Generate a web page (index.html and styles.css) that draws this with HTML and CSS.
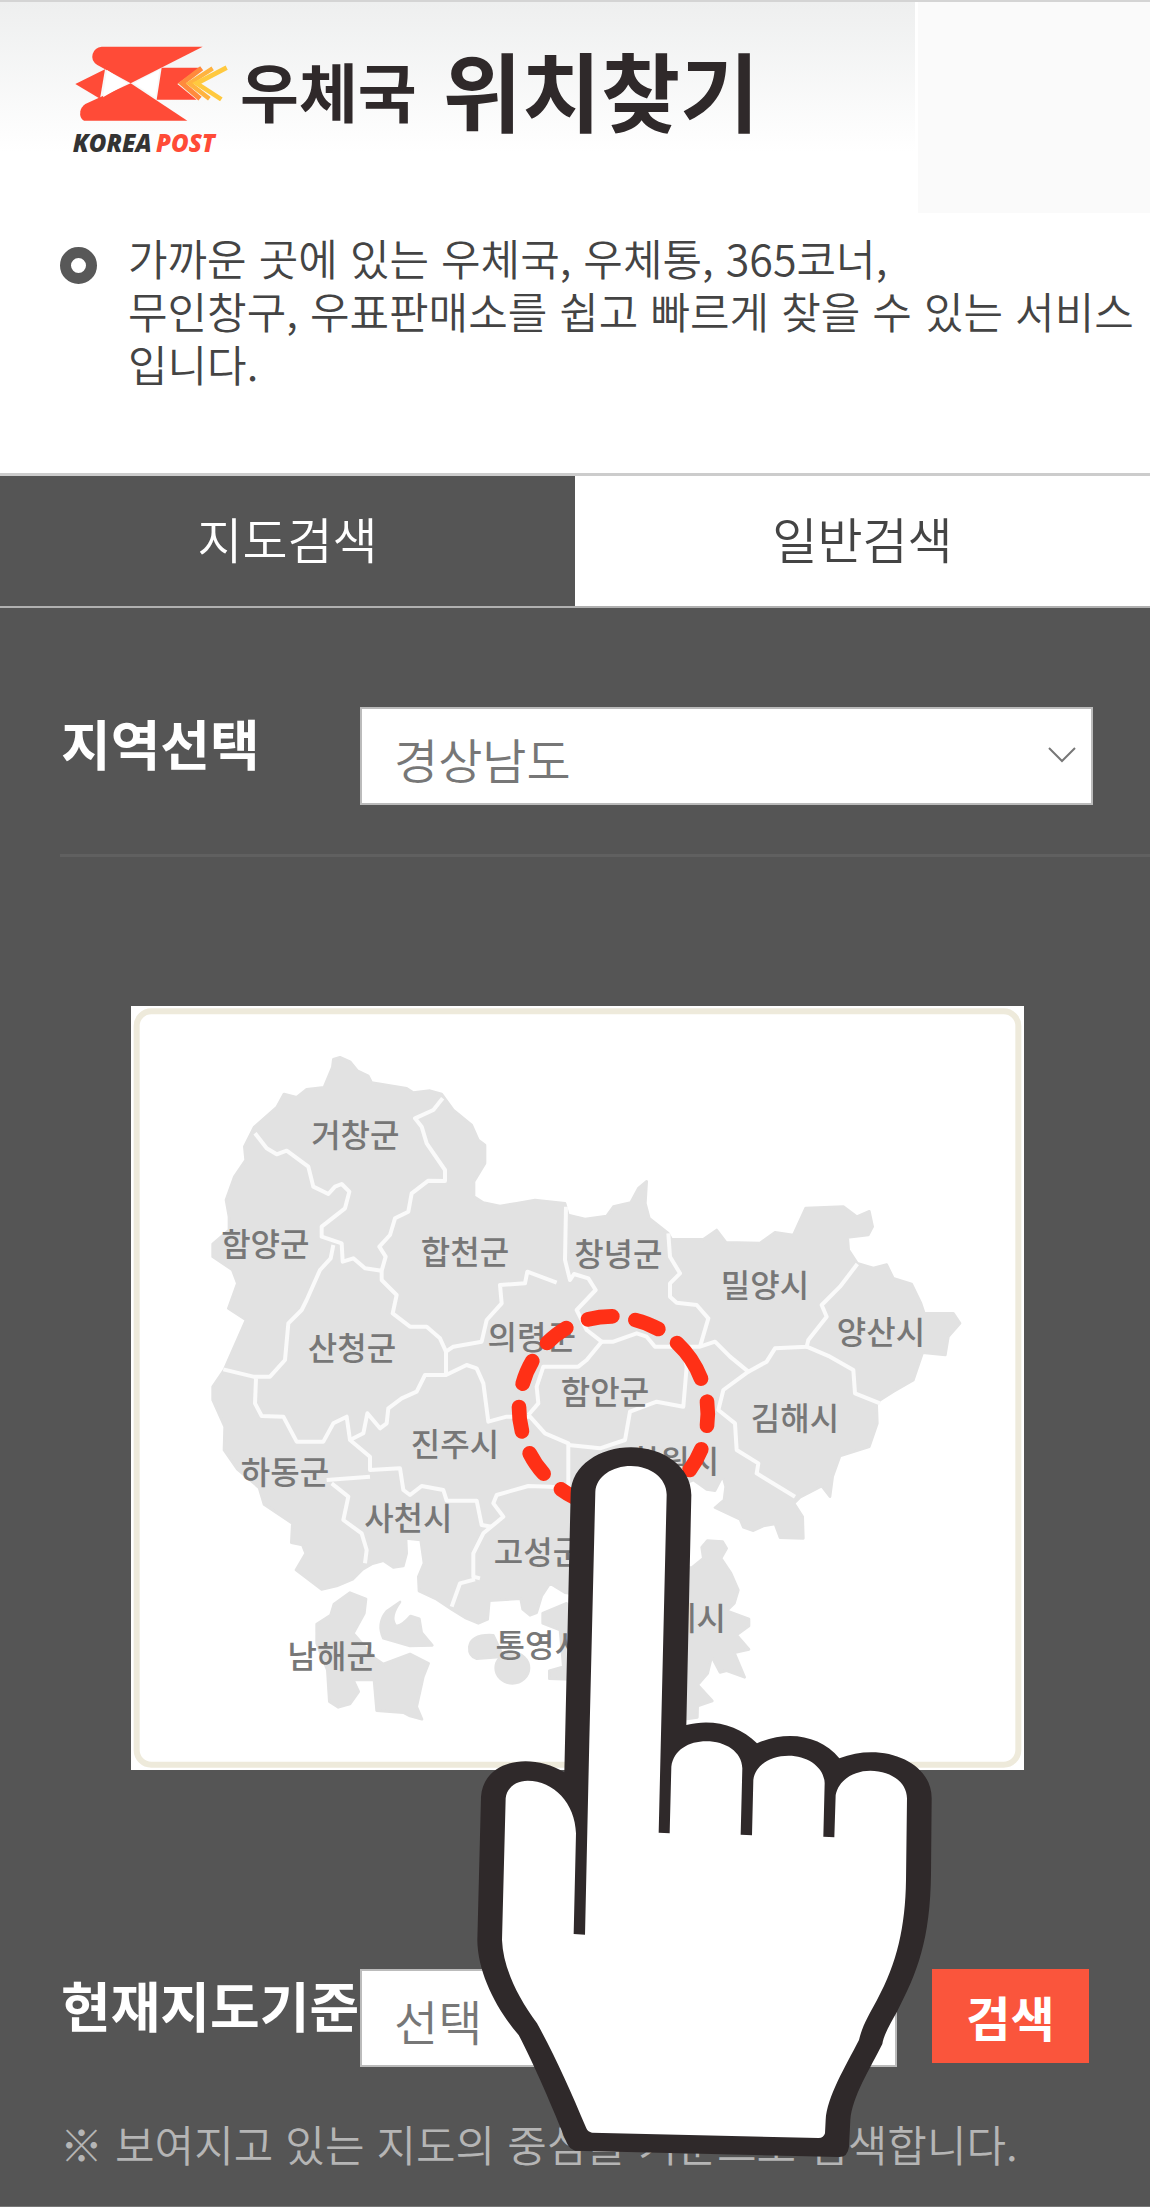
FILE: index.html
```
<!DOCTYPE html>
<html lang="ko">
<head>
  <meta charset="UTF-8">
  <meta name="viewport" content="width=device-width, initial-scale=1.0">
  <title>우체국 위치찾기</title>
  <link rel="stylesheet" href="styles.css">
</head>
<body>
  <!-- Header -->
  <header>
    <div class="brand">
      <svg class="logo" viewBox="0 0 540 390" role="img" aria-label="KOREA POST">
        <g fill="#ff4b37">
          <path d="M125 50 L428 50 L212 160 L112 105 Q92 92 98 72 Q104 52 125 50 Z"/>
          <path d="M212 160 L382 272 L72 272 Q58 266 61 244 Q64 230 76 222 Z"/>
          <path d="M135 118 L120 206 L46 162 Z"/>
          <path d="M305 113 L420 113 L352 162 L410 209 L290 209 Z"/>
        </g>
        <path d="M141 120 L202 160 L129 202 Z" fill="#fff"/>
        <path d="M298 120 L222 160 L286 202 Z" fill="#fff"/>
        <path d="M425 115 L366 160 L420 206" fill="none" stroke="#ff8a3c" stroke-width="15"/>
        <path d="M458 115 L388 160 L448 206" fill="none" stroke="#ffb33f" stroke-width="13"/>
        <path d="M500 113 L410 160 L484 208" fill="none" stroke="#ffc93f" stroke-width="14"/>
        <text class="logo-text" x="38" y="365" fill="#333">KOREA</text>
        <text class="logo-text" x="288" y="365" fill="#ff4b37">POST</text>
      </svg>
      <h1><span>우체국</span> 위치찾기</h1>
    </div>
    <div class="header-side"></div>
  </header>

  <!-- Description -->
  <p class="intro">가까운 곳에 있는 우체국, 우체통, 365코너,<br>무인창구, 우표판매소를 쉽고 빠르게 찾을 수 있는 서비스입니다.</p>

  <!-- Tabs -->
  <nav class="tabs">
    <a href="#" class="active">지도검색</a>
    <a href="#">일반검색</a>
  </nav>

  <!-- Map search -->
  <main>
    <div class="row region-row">
      <label for="region">지역선택</label>
      <div class="select-box">
        <select id="region">
          <option>경상남도</option>
        </select>
        <svg class="arrow" viewBox="0 0 28 16"><path d="M1 1 L14 14 L27 1"/></svg>
      </div>
    </div>

    <div class="map">
      <svg class="map-area" viewBox="33 48 2679 2292">
        <rect class="frame" x="50" y="64" width="2645" height="2260" rx="44"/>
        <!-- Land -->
        <g class="land">
          <path d="M660 202 L690 215 L712 242 L745 258 L755 278 L860 295 L880 308 L930 302 L965 312 L1000 360 L1055 405 L1075 450 L1095 465 L1095 520 L1062 575 L1062 620 L1090 638 L1140 648 L1190 640 L1245 630 L1335 640 L1345 675 L1395 687 L1460 678 L1480 650 L1532 638 L1555 595 L1580 574 L1576 640 L1588 685 L1645 730 L1655 748 L1750 748 L1790 720 L1818 757 L1920 759 L1965 727 L2020 735 L2057 654 L2170 650 L2210 680 L2248 664 L2258 710 L2245 735 L2183 742 L2186 780 L2212 820 L2260 834 L2300 824 L2320 865 L2375 882 L2403 940 L2413 970 L2500 970 L2520 1000 L2485 1040 L2476 1095 L2408 1088 L2380 1170 L2320 1205 L2280 1230 L2270 1245 L2272 1300 L2248 1370 L2160 1398 L2138 1460 L2130 1520 L2105 1488 L2040 1522 L2022 1540 L2048 1580 L2050 1645 L1980 1643 L1965 1602 L1930 1608 L1900 1622 L1870 1612 L1860 1588 L1785 1553 L1812 1530 L1817 1490 L1808 1458 L1785 1502 L1760 1498 L1720 1470 L1600 1520 L1420 1800 L1350 1810 L1335 1808 L1290 1780 L1265 1818 L1250 1868 L1230 1876 L1208 1858 L1202 1826 L1108 1832 L1103 1888 L1075 1900 L1035 1883 L995 1858 L950 1828 L897 1803 L895 1760 L912 1720 L902 1650 L858 1645 L860 1690 L850 1728 L820 1732 L790 1712 L755 1722 L728 1738 L698 1768 L650 1788 L605 1798 L528 1740 L557 1690 L547 1665 L514 1658 L517 1600 L432 1543 L417 1493 L352 1438 L312 1380 L314 1310 L278 1230 L278 1190 L312 1140 L378 990 L325 955 L352 880 L337 840 L278 800 L278 762 L327 720 L327 680 L318 630 L343 560 L377 510 L373 470 L402 412 L470 352 L492 312 L530 322 L560 298 L612 292 L637 232 L640 208 Z"/>
          <path d="M1745 1672 L1762 1652 L1808 1655 L1820 1675 L1803 1705 L1833 1750 L1855 1800 L1843 1840 L1820 1862 L1887 1887 L1887 1908 L1850 1935 L1887 1978 L1843 1988 L1874 2062 L1820 2042 L1800 2047 L1775 2000 L1763 2050 L1733 2085 L1777 2133 L1733 2148 L1732 2182 L1690 2188 L1640 2188 L1640 1733 L1715 1733 L1750 1705 Z"/>
          <path d="M690 1808 L738 1827 L733 1870 L700 1930 L765 2005 L790 2022 L870 1992 L926 2020 L910 2060 L890 2150 L906 2188 L870 2178 L850 2168 L770 2162 L762 2070 L700 2070 L716 2105 L690 2142 L655 2152 L628 2135 L622 2040 L590 1960 L590 1902 L632 1875 L642 1842 Z"/>
          <path d="M840 1836 Q808 1880 826 1906 Q840 1914 872 1878 L898 1886 L905 1928 L937 1966 L870 1968 L790 1945 Q770 1900 800 1864 Z"/>
          <path d="M1048 1970 Q1055 1932 1120 1936 L1150 2000 L1070 2006 Q1046 2000 1048 1970 Z"/>
          <ellipse cx="1177" cy="2034" rx="50" ry="46"/>
          <path d="M1268 1870 L1340 1840 L1400 1900 L1400 2070 L1288 2066 L1288 2042 L1330 2030 L1320 1920 L1268 1900 Z"/>
        </g>
        <!-- City and county borders -->
        <g class="border">
          <path d="M405 430 L440 475 L470 493 L500 482 L565 530 L580 590 L625 612 L645 590 L665 582 L688 605 L675 655 L605 710 L605 740 L665 760 L668 815 L700 805 L735 835 L785 842"/>
          <path d="M968 325 L940 360 L885 385 L905 410 L920 460 L975 540 L975 573 L925 572 L875 610 L865 665 L825 685 L810 735 L778 770 L797 800 L785 842 L785 870 L830 915 L818 970 L870 1010 L920 1010 L960 1045 L978 1085 L978 1155"/>
          <path d="M640 765 L632 805 L600 840 L560 930 L545 960 L505 1000 L495 1110 L450 1160 L400 1160 L310 1138"/>
          <path d="M408 1165 L405 1240 L425 1278 L490 1280 L530 1355 L610 1355 L640 1300 L680 1280 L690 1350 L750 1400 L750 1440 L840 1435 L850 1500 L870 1515 L905 1488 L970 1500 L980 1532 L1070 1532 L1085 1605 L1115 1610"/>
          <path d="M690 1350 L730 1330 L742 1270 L780 1315 L800 1300 L805 1255 L845 1225 L890 1205 L915 1155 L978 1155 L1040 1125 L1070 1135 L1090 1180 L1105 1295 L1160 1280 L1230 1280 L1275 1330 L1345 1360 L1345 1490"/>
          <path d="M978 1085 L1000 1070 L1085 1055 L1100 990 L1145 940 L1140 885 L1215 880 L1222 845 L1310 878"/>
          <path d="M1338 650 L1335 810 L1350 870 L1362 852 L1405 865 L1427 900 L1370 960 L1400 1020 L1445 1055 L1400 1110 L1375 1130 L1270 1130 L1250 1190 L1255 1240 L1225 1275"/>
          <path d="M1445 1055 L1480 1055 L1550 1030 L1580 1040 L1605 1070 L1740 1070 L1785 1055 L1830 1100 L1885 1145 L1810 1200 L1795 1260 L1845 1300 L1850 1380 L1915 1420 L1910 1450 L2025 1520"/>
          <path d="M1645 730 L1650 800 L1680 850 L1650 880 L1650 920 L1670 938 L1730 945 L1765 985 L1740 1070"/>
          <path d="M2212 822 L2160 890 L2105 945 L2120 980 L2065 1050 L2060 1070 L1965 1075 L1940 1115 L1885 1145"/>
          <path d="M2060 1070 L2130 1100 L2200 1140 L2205 1210 L2280 1240"/>
          <path d="M1690 1075 L1700 1130 L1690 1250 L1610 1235 L1530 1265 L1515 1350 L1440 1375 L1345 1365"/>
          <path d="M620 1470 L750 1460 M635 1480 L685 1520 L670 1590 L725 1630 L740 1680 L735 1720"/>
          <path d="M1400 1500 L1290 1490 L1225 1488 L1130 1515 L1120 1540 L1150 1580 L1090 1630 L1060 1690 L1060 1760 L1080 1765 M1065 1768 L1020 1780 L995 1850"/>
        </g>
        <g class="names">
          <text x="706" y="470">거창군</text>
          <text x="436" y="799">함양군</text>
          <text x="1035" y="821">합천군</text>
          <text x="1495" y="829">창녕군</text>
          <text x="1935" y="921">밀양시</text>
          <text x="2283" y="1061">양산시</text>
          <text x="696" y="1111">산청군</text>
          <text x="1235" y="1078">의령군</text>
          <text x="1455" y="1241">함안군</text>
          <text x="2025" y="1321">김해시</text>
          <text x="1005" y="1399">진주시</text>
          <text x="1665" y="1448">창원시</text>
          <text x="495" y="1481">하동군</text>
          <text x="865" y="1619">사천시</text>
          <text x="1254" y="1721">고성군</text>
          <text x="635" y="2033">남해군</text>
          <text x="1259" y="2001">통영시</text>
          <text x="1685" y="1921">거제시</text>
        </g>
      </svg>

      <!-- Pointing hand over the map and the search row -->
      <svg class="hand" viewBox="1070 900 1380 2610">
        <g class="ring" transform="translate(1020 900)">
          <path d="M383 88 A283 283 0 0 1 456 79"/>
          <path d="M525 90 A283 283 0 0 1 594 117"/>
          <path d="M650 159 A283 283 0 0 1 722 266"/>
          <path d="M740 335 A283 283 0 0 1 740 407"/>
          <path d="M723 478 A283 283 0 0 1 688 540"/>
          <path d="M345 624 A283 283 0 0 1 302 598"/>
          <path d="M250 551 A283 283 0 0 1 208 490"/>
          <path d="M185 424 A283 283 0 0 1 176 351"/>
          <path d="M187 281 A283 283 0 0 1 216 213"/>
          <path d="M260 159 A283 283 0 0 1 318 114"/>
        </g>
        <g transform="translate(960 2250)">
          <path fill="#2f292a" d="M391 -740 C393 -825 480 -878 572 -878 C668 -878 753 -820 753 -735 L738 -45 C815 -65 895 -45 950 10 C1040 -30 1140 -15 1197 55 C1320 5 1474 60 1474 175 L1472 400 C1470 600 1430 700 1370 815 C1350 850 1330 885 1326 912 C1290 985 1235 1070 1230 1140 L1226 1220 Q1222 1252 1195 1251 L405 1232 Q388 1228 380 1210 C340 1110 280 970 235 885 C170 810 112 700 111 600 L122 170 C130 60 270 35 372 97 Z"/>
          <path fill="#fff" d="M465 -745 C468 -790 515 -822 572 -822 C630 -822 680 -785 679 -735 L655 278 L688 280 L693 80 C700 30 745 4 798 4 C855 4 905 35 906 85 L901 284 L935 286 L939 120 C945 75 990 47 1045 47 C1100 47 1152 80 1153 130 L1149 290 L1182 292 L1186 165 C1195 120 1240 92 1290 92 C1350 92 1399 125 1400 175 L1397 420 C1395 560 1370 670 1310 780 C1285 825 1265 860 1256 900 C1215 980 1160 1070 1156 1140 L1154 1180 Q1150 1194 1135 1194 L455 1178 Q443 1176 438 1165 C390 1050 340 940 290 850 C230 770 188 680 185 600 L196 175 C200 140 230 122 262 122 C340 122 405 190 407 280 L400 582 L434 584 L447 0 Z"/>
        </g>
      </svg>
    </div>

    <div class="row search-row">
      <label for="kind">현재지도기준</label>
      <div class="select-box">
        <select id="kind">
          <option>선택</option>
        </select>
      </div>
      <button type="button">검색</button>
    </div>
    <p class="note">※ 보여지고 있는 지도의 중심을 기준으로 검색합니다.</p>
  </main>
</body>
</html>
```
FILE: styles.css
```
*,
*::before {
  box-sizing: border-box;
}

body {
  margin: 0;
  background-color: #fff;
  color: #444;
  font-family: "Noto Sans CJK KR", sans-serif;
  font-size: 43px;
  font-weight: 350;
  line-height: 53px;
  overflow-x: hidden;
}

/* Header */
header {
  display: flex;
  height: 213px;
  border-top: 2px solid #d4d4d4;
}

.brand {
  flex: 1;
  display: flex;
  align-items: flex-start;
  padding: 28px 0 0 60px;
  background: linear-gradient(#eeefef, #fff 150px);
}

.header-side {
  width: 235px;
  border-left: 3px solid #fff;
  background-color: #fafafa;
}

.logo {
  width: 180px;
  height: 130px;
}

.logo-text {
  font-family: "Open Sans", sans-serif;
  font-size: 72px;
  font-weight: 800;
  font-style: italic;
}

h1 {
  display: flex;
  align-items: center;
  gap: 26px;
  margin: 0;
  color: #2f292a;
  font-size: 86px;
  line-height: 118px;
}

h1 span {
  font-size: 64px;
}

/* Description */
.intro {
  position: relative;
  margin: 0;
  padding: 18px 0 83px 128px;
}

.intro::before {
  content: "";
  position: absolute;
  left: 60px;
  top: 34px;
  width: 37px;
  height: 37px;
  border: 11px solid #585858;
  border-radius: 50%;
}

/* Tabs */
.tabs {
  display: flex;
  border-bottom: 2px solid #b0b0b0;
}

.tabs a {
  flex: 1;
  padding-bottom: 6px;
  border-top: 3px solid #ccc;
  color: #444;
  font-size: 49px;
  line-height: 124px;
  text-align: center;
  text-decoration: none;
}

.tabs .active {
  background-color: #555;
  color: #fff;
}

/* Map search */
main {
  padding: 99px 0 36px 60px;
  border-bottom: 1px solid #777;
  background-color: #555;
  color: #fff;
}

.row {
  display: flex;
}

.row label {
  flex: 0 0 300px;
  padding-left: 1px;
  font-size: 54px;
  font-weight: 700;
  line-height: 72px;
  white-space: nowrap;
}

.region-row {
  padding: 0 57px 49px 0;
  border-bottom: 3px solid #606060;
}

.select-box {
  position: relative;
  flex: 1;
}

select {
  appearance: none;
  width: 100%;
  height: 98px;
  padding: 4px 32px 0;
  border: 2px solid #bbb;
  border-radius: 0;
  background-color: #fff;
  color: #777;
  font: inherit;
  font-size: 48px;
}

.arrow {
  position: absolute;
  right: 17px;
  top: 40px;
  width: 28px;
  height: 16px;
  fill: none;
  stroke: #777;
  stroke-width: 2;
}

.map {
  position: relative;
  width: 893px;
  margin: 149px 0 199px 71px;
}

.map-area {
  display: block;
  width: 100%;
  background-color: #fff;
}

.frame {
  fill: #fff;
  stroke: #eeeadb;
  stroke-width: 18;
}

.land {
  fill: #e2e2e2;
  stroke: #e2e2e2;
  stroke-width: 8;
  stroke-linejoin: round;
}

.border {
  fill: none;
  stroke: #fafafa;
  stroke-width: 12;
  stroke-linejoin: round;
}

.names {
  fill: #777;
  font-size: 96px;
  font-weight: 500;
  text-anchor: middle;
}

.hand {
  position: absolute;
  left: 346px;
  top: 284px;
  width: 460px;
  height: 870px;
  z-index: 1;
}

.ring {
  fill: none;
  stroke: #ff3016;
  stroke-width: 44;
  stroke-linecap: round;
}

.search-row {
  padding-right: 61px;
}

.search-row .select-box {
  margin-right: 35px;
}

.search-row button {
  width: 157px;
  height: 94px;
  padding: 0;
  border: 0;
  background-color: #fa553c;
  color: #fff;
  font: inherit;
  font-size: 48px;
  font-weight: 700;
}

.note {
  margin: 50px 0 0;
  color: #b5b5b5;
}
```
